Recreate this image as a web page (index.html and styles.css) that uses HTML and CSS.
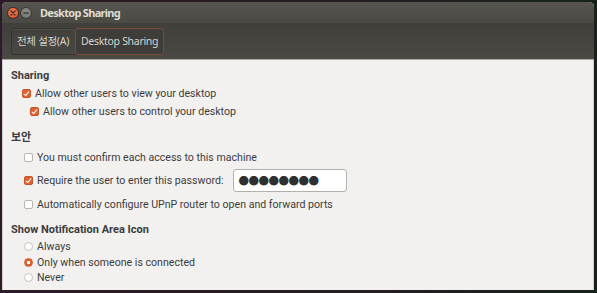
FILE: index.html
```html
<!DOCTYPE html>
<html lang="ko">
<head>
	<meta charset="UTF-8">
	<title>Desktop Sharing</title>
	<link rel="stylesheet" href="styles.css">
</head>
<body>
	<div class="window">
		<div class="titlebar">
			<span class="wbtn close">
				<svg width="6" height="6" viewBox="0 0 6 6"><path d="M1 1L5 5M5 1L1 5" stroke="#3c2a22" stroke-width="1.3" stroke-linecap="round"/></svg>
			</span>
			<span class="wbtn minimize">
				<svg width="6" height="6" viewBox="0 0 6 6"><path d="M1 3H5" stroke="#3c3b37" stroke-width="1.3" stroke-linecap="round"/></svg>
			</span>
			<span class="title">Desktop Sharing</span>
		</div>
		<div class="toolbar">
			<div class="tabs">
				<div class="tab">전체 설정(A)</div>
				<div class="tab active">Desktop Sharing</div>
			</div>
		</div>
		<div class="content">
			<section class="group">
				<h2>Sharing</h2>
				<label class="row indent1"><span class="check on"></span>Allow other users to view your desktop</label>
				<label class="row indent2"><span class="check on"></span>Allow other users to control your desktop</label>
			</section>
			<section class="group">
				<h2>보안</h2>
				<label class="row indent3"><span class="check"></span>You must confirm each access to this machine</label>
				<div class="row indent3 pwrow">
					<span class="check on"></span>Require the user to enter this password:
					<span class="entry">●●●●●●●●</span>
				</div>
				<label class="row indent3"><span class="check"></span>Automatically configure UPnP router to open and forward ports</label>
			</section>
			<section class="group">
				<h2>Show Notification Area Icon</h2>
				<label class="row radio-row indent3"><span class="radio"></span>Always</label>
				<label class="row radio-row indent3"><span class="radio on"></span>Only when someone is connected</label>
				<label class="row radio-row indent3"><span class="radio"></span>Never</label>
			</section>
		</div>
	</div>
</body>
</html>
```

FILE: styles.css
```css
html, body { margin: 0; height: 100%; }
body { background: linear-gradient(90deg, #2c1b28 0%, #251c24 60%, #17231a 100%); font-family: Roboto, "Noto Sans CJK KR", sans-serif; overflow: hidden; }
.window { margin: 2px 3px 0 2px; height: 288px; border-radius: 5px 5px 0 0; overflow: hidden; display: flex; flex-direction: column; background: #f2f1f0; }
.titlebar { height: 21px; flex: none; display: flex; align-items: center; padding-left: 6px; background: linear-gradient(#56554f, #4a4944); }
.wbtn { width: 10px; height: 10px; border-radius: 50%; display: flex; align-items: center; justify-content: center; margin-right: 3px; }
.wbtn.close { background: radial-gradient(circle at 50% 35%, #f3794f, #df5326); box-shadow: 0 0 0 1px #3e2a24; }
.wbtn.minimize { background: radial-gradient(circle at 50% 35%, #8d8b84, #6f6d67); box-shadow: 0 0 0 1px #3a3935; }
.title { color: #dfdbd2; font-family: "Noto Sans", sans-serif; font-weight: bold; font-size: 11px; letter-spacing: -0.7px; margin-left: 6px; }
.toolbar { height: 36px; flex: none; background: linear-gradient(#403f3b, #4a4944); border-bottom: 1px solid #aaa89f; display: flex; align-items: center; padding-left: 9px; }
.tabs { display: flex; border: 1px solid #35342f; border-radius: 3px; box-shadow: inset 0 1px 0 #4e4d48; }
.tab { color: #d6d3cc; font-family: "Noto Sans", "Noto Sans CJK KR", sans-serif; font-size: 10.5px; letter-spacing: -0.3px; padding: 0 6px 0 5px; height: 25px; line-height: 25px; }
.tab.active { border: 1px solid #7d4c36; border-radius: 3px; margin: -1px -1px -1px 0; background: #3e3d39; padding: 0 5px 0 5px; }
.content { flex: 1; padding: 8px 8px 0; color: #3c3c3c; font-size: 10.6px; border-left: 1px solid #d0cfcc; border-right: 1px solid #d0cfcc; }
.group { margin-bottom: 10px; }
.group:nth-child(2) { margin-bottom: 9px; }
h2 { font-size: 11px; line-height: 16px; font-weight: bold; margin: 0; color: #3c3c3c; }
.row { display: flex; align-items: center; height: 18px; }
.group:nth-child(2) h2 { margin-bottom: 2px; }
.group:nth-child(3) h2 { margin-bottom: 1px; }
.radio-row { height: 15.5px; }
.indent1 { padding-left: 11px; }
.indent2 { padding-left: 19px; }
.indent3 { padding-left: 13px; }
.pwrow { height: 24px; margin: 2px 0 3px; }
.check { width: 7px; height: 7px; border: 1px solid #b8b6b2; border-radius: 2px; background: #fff; margin-right: 4px; box-sizing: content-box; position: relative; }
.check.on { background: #e2632f; border-color: #c4552a; }
.check.on::after { content: ""; position: absolute; left: 2px; top: 0; width: 2px; height: 5px; border: solid #fff; border-width: 0 1.5px 1.5px 0; transform: rotate(40deg); }
.radio { width: 7px; height: 7px; border: 1px solid #c4c2be; border-radius: 50%; background: #fff; margin-right: 4px; box-sizing: content-box; }
.radio.on { background: radial-gradient(circle, #fff 0 1.4px, #e2632f 2px); border-color: #d45a2a; }
.entry { margin-left: 10px; width: 114px; height: 23px; box-sizing: border-box; border: 1px solid #b3b1ab; border-radius: 3px; background: #fff; font-family: "Noto Sans CJK KR", sans-serif; font-size: 10.5px; color: #2f2f2f; line-height: 21px; padding-left: 4px; letter-spacing: -0.5px; }
```
